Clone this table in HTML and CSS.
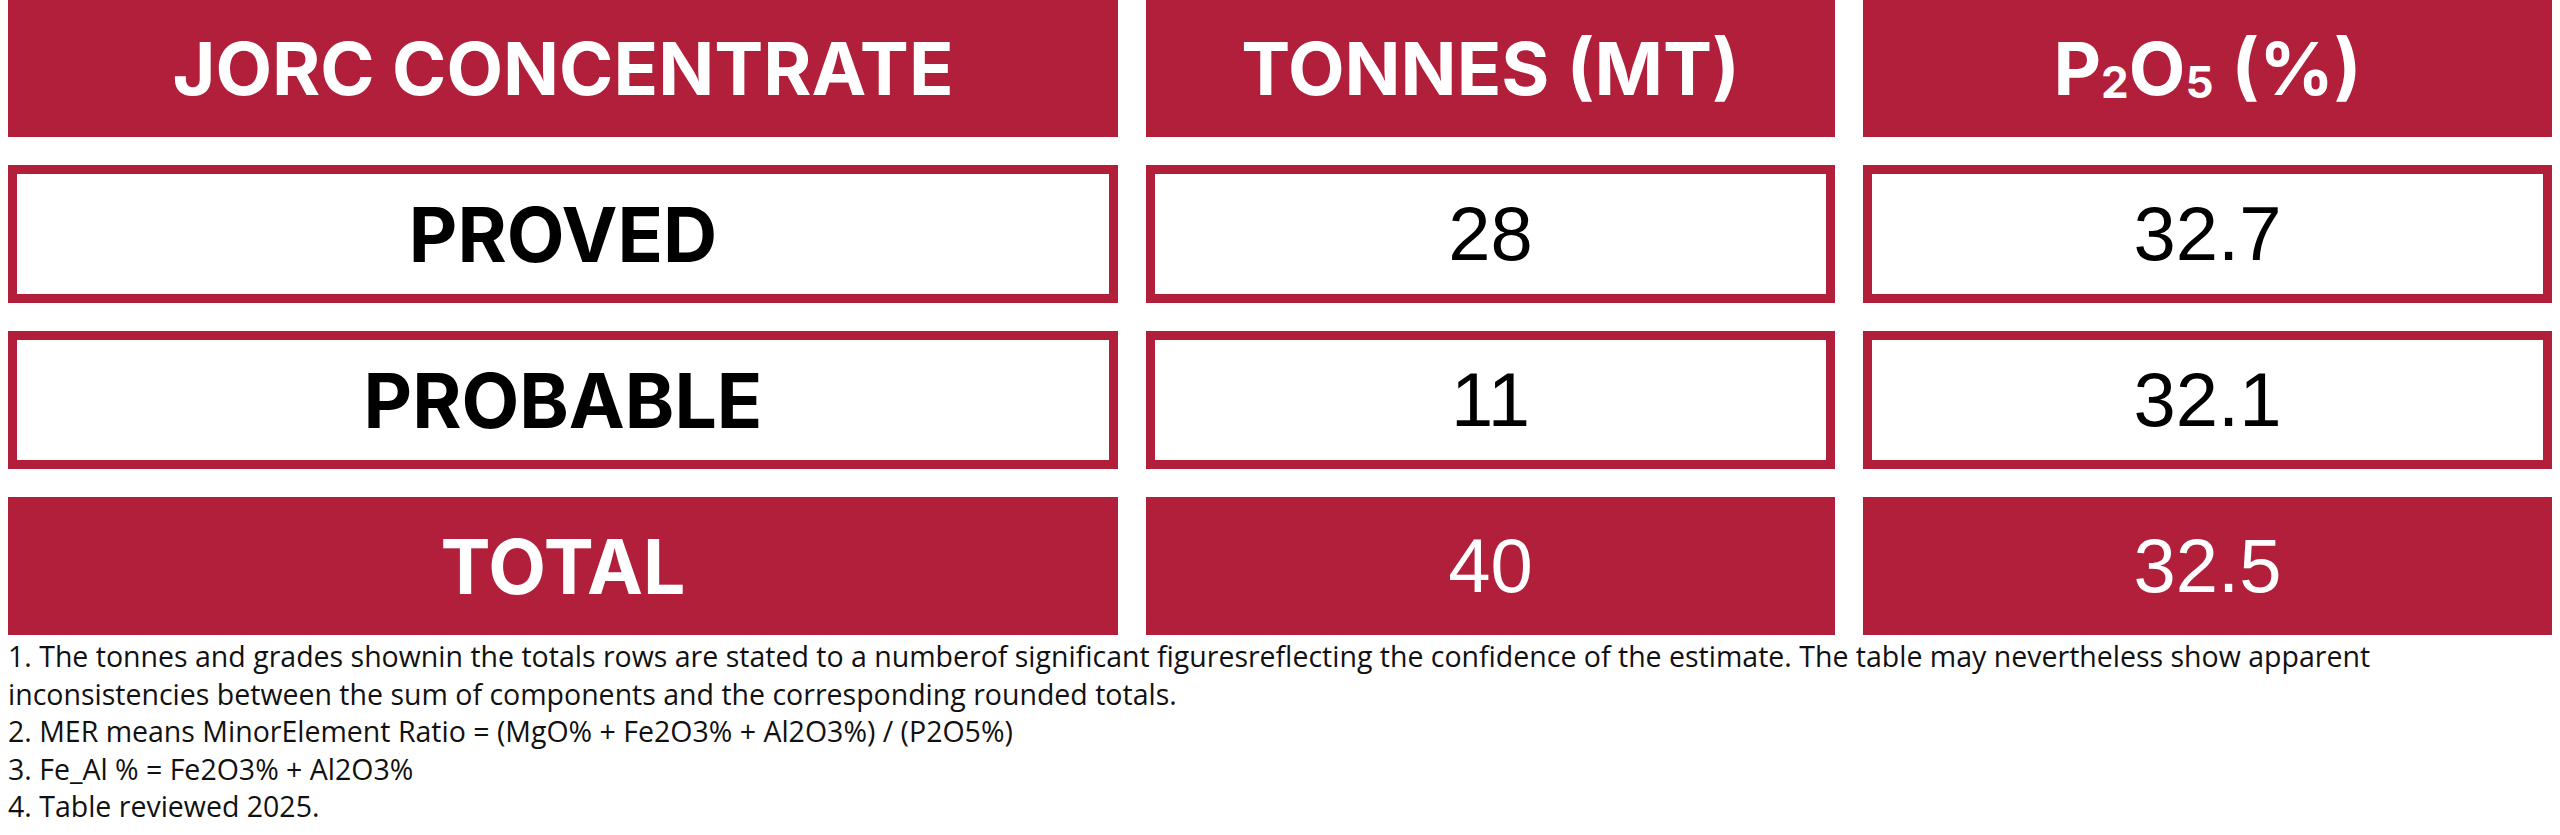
FILE: index.html
```html
<!DOCTYPE html>
<html lang="en">
<head>
<meta charset="utf-8">
<title>JORC Concentrate</title>
<link rel="stylesheet" href="styles.css">
</head>
<body>
<div class="page">
  <div class="grid">
    <div class="cell head label head-label">JORC CONCENTRATE</div>
    <div class="cell head label head-label">TONNES (MT)</div>
    <div class="cell head label head-label">P<span class="sub">2</span>O<span class="sub">5</span><span class="gap"></span>(%)</div>

    <div class="cell boxed label">PROVED</div>
    <div class="cell boxed num">28</div>
    <div class="cell boxed num">32.7</div>

    <div class="cell boxed label">PROBABLE</div>
    <div class="cell boxed num">11</div>
    <div class="cell boxed num">32.1</div>

    <div class="cell head label">TOTAL</div>
    <div class="cell head num">40</div>
    <div class="cell head num">32.5</div>
  </div>
  <div class="notes">
    <p>1. The tonnes and grades shownin the totals rows are stated to a numberof significant figuresreflecting the confidence of the estimate. The table may nevertheless show apparent<br>inconsistencies between the sum of components and the corresponding rounded totals.</p>
    <p>2. MER means MinorElement Ratio = (MgO% + Fe2O3% + Al2O3%) / (P2O5%)</p>
    <p>3. Fe_Al % = Fe2O3% + Al2O3%</p>
    <p>4. Table reviewed 2025.</p>
  </div>
</div>
</body>
</html>
```

FILE: styles.css
```css
html, body {
  margin: 0;
  padding: 0;
  background: #ffffff;
}

.page {
  padding: 0 8px;
}

.grid {
  display: grid;
  grid-template-columns: 1110fr 689fr 689fr;
  grid-template-rows: 137px 138px 138px 138px;
  column-gap: 28px;
  row-gap: 28px;
}

.cell {
  box-sizing: border-box;
  display: flex;
  align-items: center;
  justify-content: center;
  white-space: nowrap;
}

.head {
  background: #b21f3a;
  color: #ffffff;
}

.boxed {
  background: #ffffff;
  border: 9px solid #b21f3a;
  color: #000000;
}

.label {
  font-family: "Inter", "Liberation Sans", sans-serif;
  font-weight: 700;
  font-size: 75px;
  line-height: 1;
}

.head-label {
  font-size: 73.5px;
}

.num {
  font-family: "Liberation Sans", Arial, sans-serif;
  font-weight: 400;
  font-size: 76px;
  line-height: 1;
}

.sub {
  font-size: 44px;
  position: relative;
  top: 13px;
}

.gap {
  display: inline-block;
  width: 18px;
}

.notes {
  padding-top: 3px;
  font-family: "Open Sans", "Noto Sans", sans-serif;
  font-size: 28.5px;
  line-height: 37.5px;
  color: #111111;
}

.notes p {
  margin: 0;
}
```
